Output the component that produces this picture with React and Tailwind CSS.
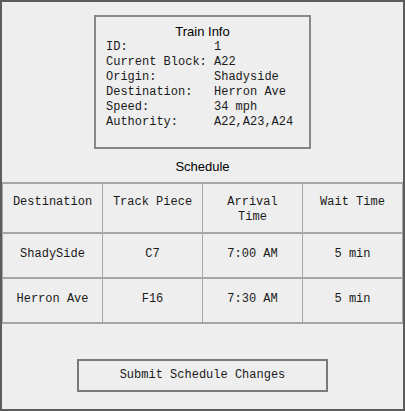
export default function App() {
  const info = [
    ["ID:", "1"],
    ["Current Block:", "A22"],
    ["Origin:", "Shadyside"],
    ["Destination:", "Herron Ave"],
    ["Speed:", "34 mph"],
    ["Authority:", "A22,A23,A24"],
  ];

  const headers = [["Destination"], ["Track Piece"], ["Arrival", "Time"], ["Wait Time"]];

  const rows = [
    ["ShadySide", "C7", "7:00 AM", "5 min"],
    ["Herron Ave", "F16", "7:30 AM", "5 min"],
  ];

  const mono = "font-['Courier_New','Liberation_Mono',monospace]";
  const sans = "font-['Liberation_Sans',Arial,sans-serif]";

  return (
    <div className="w-[405px] h-[411px] border-2 border-[#5c5c5c] bg-[#eeeeee] text-[#1a1a1a] flex flex-col">
      {/* Train Info */}
      <div className="mx-auto mt-[13px] w-[217px] h-[134px] border-2 border-[#878787] flex flex-col">
        <div className={`${sans} text-[13px] leading-[14px] text-center pt-[8px] text-black`}>
          Train Info
        </div>
        <div className={`${mono} text-[12px] leading-[15px] pl-[10px] pt-[1px] grid grid-cols-[108px_1fr]`}>
          {info.map(([label, value]) => (
            <div key={label} className="contents">
              <span className="whitespace-pre">{label}</span>
              <span>{value}</span>
            </div>
          ))}
        </div>
      </div>

      {/* Schedule */}
      <div className={`${sans} text-[13px] leading-[15px] text-center mt-[10px] text-black`}>
        Schedule
      </div>

      <div className={`${mono} text-[12px] leading-[15px] mt-[8px] grid grid-cols-4 border-t-2 border-l border-[#a5a5a5]`}>
        {headers.map((h) => (
          <div
            key={h.join(" ")}
            className="h-[50px] border-r border-b-2 border-[#a5a5a5] flex flex-col items-center text-center pt-[11px] whitespace-nowrap"
          >
            {h.map((line) => (
              <span key={line}>{line}</span>
            ))}
          </div>
        ))}
        {rows.map((r, i) =>
          r.map((c, j) => (
            <div
              key={`${i}-${j}`}
              className="h-[45px] border-r border-b-2 border-[#a5a5a5] flex items-center justify-center pb-[3px] whitespace-nowrap"
            >
              {c}
            </div>
          ))
        )}
      </div>

      {/* Submit */}
      <div className="flex justify-center mt-[35px]">
        <button
          className={`${mono} text-[12px] w-[251px] h-[33px] pb-[2px] border-2 border-[#7a7a7a] bg-[#eeeeee] text-[#1a1a1a]`}
        >
          Submit Schedule Changes
        </button>
      </div>
    </div>
  );
}
